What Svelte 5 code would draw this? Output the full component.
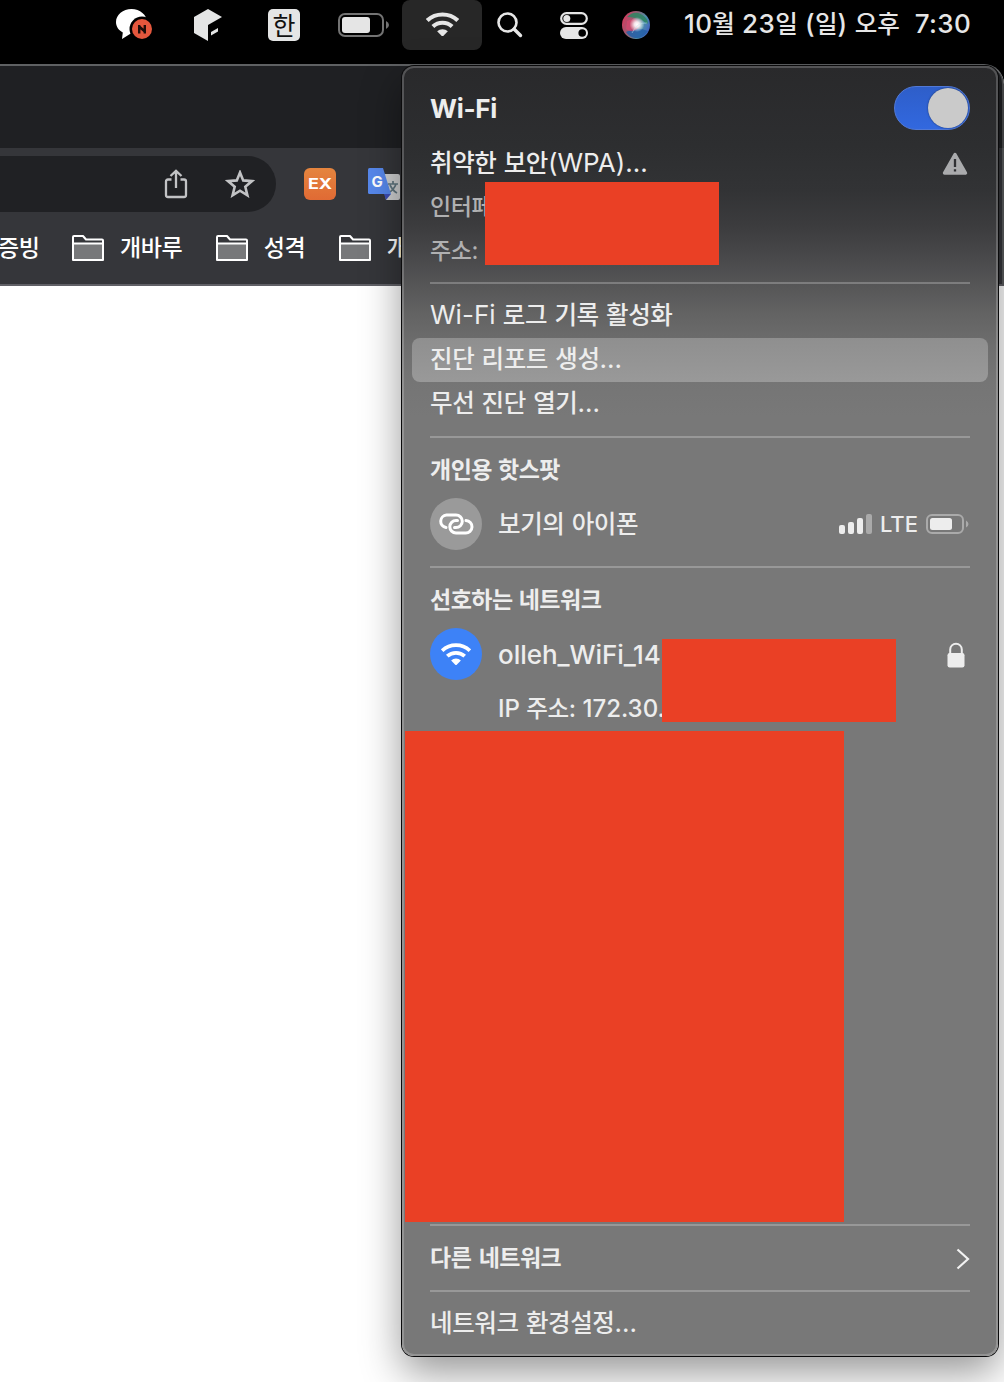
<script>
	const bookmarks = ['개바루', '성격', '개'];

	// hangul runs get their own size and tracking next to the latin text
	function runs(text) {
		return text.split(/([가-힣]+)/).filter(Boolean);
	}

	const isHangul = (text) => /[가-힣]/.test(text);
</script>

{#snippet label(text)}
	<span class="label">{#each runs(text) as run}<span class:ko={isHangul(run)}>{run}</span>{/each}</span>
{/snippet}

{#snippet wifi(size)}
	<svg class="wifi" width={size} height={size * 0.75} viewBox="0 0 32 24" fill="none" aria-hidden="true">
		<path d="M1.2 8.2A21.7 21.7 0 0 1 30.8 8.2" stroke="currentColor" stroke-width="4" />
		<path d="M6.7 14.1A13.6 13.6 0 0 1 25.3 14.1" stroke="currentColor" stroke-width="4" />
		<path d="M16 24L10.8 18.7A7.6 7.6 0 0 1 21.2 18.7Z" fill="currentColor" />
	</svg>
{/snippet}

<div class="screen">
	<header class="menubar">
		<svg class="talk" width="36" height="32" viewBox="0 0 36 32" aria-hidden="true">
			<path d="M15.500 0C7 0 0 5.700 0 13c0 4.600 2.700 8.300 6.800 10.500L6 30l8-5h3c8 0 14-5 14-12S24 0 15.500 0Z" fill="#fff" />
			<circle cx="26" cy="20" r="12.500" fill="#000" />
			<circle cx="26" cy="20" r="10" fill="#e4573d" />
			<path d="M23.200 24.500v-8.500M28.800 24.500v-8.500M23.200 17.500l5.600 5" stroke="#1c0d0a" stroke-width="2.400" />
		</svg>
		<svg class="cube" width="28" height="32" viewBox="0 0 28 32" fill="#e4e5e5" aria-hidden="true">
			<path d="M14 0L28 8L14 16V32L0 24V8Z" />
			<path d="M17 23L24 19V22.500L17 26.500Z" />
		</svg>
		<span class="input-source">한</span>
		<svg class="battery" width="50" height="24" viewBox="0 0 50 24" fill="none" aria-hidden="true">
			<rect x="1" y="1" width="44" height="22" rx="6" stroke="#737373" stroke-width="2" />
			<rect x="4" y="4" width="28" height="16" rx="3" fill="#e5e5e5" />
			<path d="M48 8Q51 9.500 51 12Q51 14.500 48 16Z" fill="#737373" />
		</svg>
		<div class="menubar__active">
			{@render wifi(33)}
		</div>
		<svg class="search" width="26" height="26" viewBox="0 0 26 26" fill="none" stroke="#e6e6e6" aria-hidden="true">
			<circle cx="10.500" cy="10.500" r="9" stroke-width="2.600" />
			<path d="M17 17L23.500 23.500" stroke-width="3.400" stroke-linecap="round" />
		</svg>
		<svg class="controls" width="28" height="28" viewBox="0 0 28 28" fill="none" aria-hidden="true">
			<rect x="1.200" y="2.200" width="25.600" height="10.600" rx="5.300" stroke="#e6e6e6" stroke-width="2.200" />
			<circle cx="6.800" cy="7.500" r="3.500" fill="#e6e6e6" />
			<rect x="0" y="16" width="28" height="12" rx="6" fill="#e6e6e6" />
			<circle cx="22.200" cy="22" r="3.800" fill="#000" />
		</svg>
		<svg class="siri" width="28" height="28" viewBox="0 0 28 28" aria-hidden="true">
			<defs>
				<linearGradient id="orb" x1="0" y1="0.300" x2="1" y2="0.700">
					<stop offset="0" stop-color="#d83a5e" />
					<stop offset="0.400" stop-color="#896477" />
					<stop offset="0.700" stop-color="#4e91aa" />
					<stop offset="1" stop-color="#405dc4" />
				</linearGradient>
				<radialGradient id="glow">
					<stop offset="0" stop-color="#fff" />
					<stop offset="0.350" stop-color="#fff" stop-opacity="0.850" />
					<stop offset="1" stop-color="#fff" stop-opacity="0" />
				</radialGradient>
			</defs>
			<circle cx="14" cy="14" r="14" fill="url(#orb)" />
			<path d="M5 6Q14-3 24 7Q27 11 25 13Q18 6 5 6Z" fill="#2d8562" opacity="0.850" />
			<path d="M4 21Q14 15 26 20Q21 28 13 27Q7 26 4 21Z" fill="#245fa7" opacity="0.850" />
			<path d="M5 10Q14 5 18 14Q12 24 4 18" fill="#df446d" opacity="0.700" />
			<circle cx="15" cy="13.500" r="7.500" fill="url(#glow)" />
			<path d="M10 22Q15 11 25 12" fill="none" stroke="#bfe9f5" stroke-width="0.800" opacity="0.600" />
		</svg>
		<time class="clock">{@render label('10월 23일 (일) 오후')}<span class="clock__time">7:30</span></time>
	</header>

	<main class="browser">
		<div class="browser__tabs"></div>
		<div class="browser__toolbar">
			<div class="omnibox">
				<svg width="24" height="30" viewBox="0 0 24 30" fill="none" stroke="#c2c3c5" stroke-width="2.300" aria-hidden="true">
					<path d="M7.500 10.500H4Q2 10.500 2 12.500V26Q2 28 4 28H20Q22 28 22 26V12.500Q22 10.500 20 10.500H16.500M12 19V2.500M6.500 7L12 1.800L17.500 7" />
				</svg>
				<svg width="30" height="28" viewBox="0 0 30 28" fill="none" stroke="#c2c3c5" stroke-width="2.600" aria-hidden="true">
					<path d="M15 2.500L18.200 10.400L27 11.100L20.300 16.700L22.400 25.300L15 20.700L7.600 25.300L9.700 16.700L3 11.100L11.800 10.400Z" />
				</svg>
			</div>
			<span class="ext"><span class="ext__name">EX</span></span>
			<svg class="translate" width="32" height="32" viewBox="0 0 32 32" aria-hidden="true">
				<path d="M14 6H30Q32 6 32 8V30Q32 32 30 32H18Z" fill="#cfd0d1" />
				<path d="M20 16H30M25 13V16M28 16Q26 22 20 25M22 17Q25 23 29 25" stroke="#60757f" stroke-width="1.700" fill="none" />
				<path d="M16 26H23L18 32Z" fill="#3d4eb5" />
				<path d="M1.500 0H15L23 26H1.500Q0 26 0 24.500V1.500Q0 0 1.500 0Z" fill="#5788ec" />
				<text x="3.500" y="18.500" fill="#fff">G</text>
			</svg>
		</div>
		<nav class="bookmarks">
			<span class="bookmarks__cut">증빙</span>
			{#each bookmarks as name}
				<span class="bookmark">
					<svg width="32" height="26" viewBox="0 0 32 26" aria-hidden="true">
						<path d="M1 25V2Q1 1 2 1H11L14 4.500H30Q31 4.500 31 5.500V25Z" fill="#35363a" />
						<path d="M1 9H31V25H1Z" fill="#77787a" />
						<path d="M1 25V2Q1 1 2 1H11L14 4.500H30Q31 4.500 31 5.500V25ZM1 8.500H31" fill="none" stroke="#fff" stroke-width="2" stroke-linejoin="round" />
					</svg>
					{name}
				</span>
			{/each}
		</nav>
	</main>

	<section class="panel" aria-label="Wi-Fi">
		<div class="panel__head">
			<h1>Wi-Fi</h1>
			<span class="toggle"><span class="toggle__knob"></span></span>
		</div>
		<div class="row">
			{@render label('취약한 보안(WPA)...')}
			<svg class="warning" width="26" height="24" viewBox="0 0 26 24" aria-hidden="true">
				<path d="M13 2.500L23.500 21H2.500Z" fill="#aaabad" stroke="#aaabad" stroke-width="3.400" stroke-linejoin="round" />
				<path d="M13 7V15M13 17.300V19.500" stroke="#303134" stroke-width="2.300" />
			</svg>
		</div>
		<div class="row row--dim">{@render label('인터페')}</div>
		<div class="row row--dim">{@render label('주소:')}</div>
		<hr />
		<div class="row row--first">{@render label('Wi-Fi 로그 기록 활성화')}</div>
		<div class="row row--hover">{@render label('진단 리포트 생성...')}</div>
		<div class="row">{@render label('무선 진단 열기...')}</div>
		<hr class="after-row" />
		<h2>{@render label('개인용 핫스팟')}</h2>
		<div class="network">
			<span class="badge">
				<svg width="36" height="22" viewBox="0 0 36 22" fill="none" stroke="#fff" stroke-width="3" stroke-linecap="round" aria-hidden="true">
					<path d="M8 14.500A6.300 6.300 0 0 1 8.500 2H18A6.300 6.300 0 0 1 18 14.600H16.500" />
					<path d="M28 7.500A6.200 6.200 0 0 1 27.500 20H18A6.200 6.200 0 0 1 18 7.600H19.500" />
				</svg>
			</span>
			{@render label('보기의 아이폰')}
			<span class="cellular">
				<svg width="33" height="20" viewBox="0 0 33 20" fill="#ededed" aria-hidden="true">
					<rect x="0" y="11" width="6" height="9" rx="2" />
					<rect x="9" y="8" width="6" height="12" rx="2" />
					<rect x="18" y="4" width="6" height="16" rx="2" />
					<rect x="27" y="0" width="6" height="20" rx="2" fill="#aaa" />
				</svg>
				<span class="lte">LTE</span>
				<svg width="44" height="20" viewBox="0 0 44 20" fill="none" aria-hidden="true">
					<rect x="1" y="1" width="36" height="18" rx="5" stroke="#aaa" stroke-width="2" />
					<rect x="4" y="4" width="22" height="12" rx="2.500" fill="#ededed" />
					<path d="M40 6.500Q42.500 8 42.500 10Q42.500 12 40 13.500Z" fill="#aaa" />
				</svg>
			</span>
		</div>
		<hr class="after-network" />
		<h2>{@render label('선호하는 네트워크')}</h2>
		<div class="network network--joined">
			<span class="badge badge--on">{@render wifi(30)}</span>
			{@render label('olleh_WiFi_14')}
			<svg class="lock" width="18" height="26" viewBox="0 0 18 26" fill="none" aria-hidden="true">
				<path d="M3.200 12V7.500A5.800 5.800 0 0 1 14.800 7.500V12" stroke="#ededed" stroke-width="2" />
				<rect x="0.500" y="11" width="17" height="14.500" rx="2.200" fill="#ededed" />
			</svg>
		</div>
		<div class="row row--ip">{@render label('IP 주소: 172.30.')}</div>
		<div class="hidden-list"></div>
		<hr class="flush" />
		<div class="row row--more">
			{@render label('다른 네트워크')}
			<svg class="chevron" width="14" height="22" viewBox="0 0 14 22" fill="none" stroke="#f2f2f2" stroke-width="2.200" aria-hidden="true">
				<path d="M1.500 1.500L12 11L1.500 20.500" />
			</svg>
		</div>
		<hr class="flush" />
		<div class="row row--last">{@render label('네트워크 환경설정...')}</div>

		<div class="redaction redaction--address"></div>
		<div class="redaction redaction--ip"></div>
	</section>
</div>

<style>
	:global(body) {
		background: #fff;
	}

	.screen {
		position: relative;
		box-sizing: border-box;
		width: 1004px;
		height: 1382px;
		overflow: hidden;
		background: #000;
		font-family: Inter, 'Noto Sans CJK KR', sans-serif;
		font-size: 26px;
		color: #ededed;
	}

	svg {
		display: block;
		flex: none;
	}

	.label {
		white-space: pre;
	}

	.ko {
		font-family: 'Noto Sans CJK KR', sans-serif;
		font-size: 24.5px;
		font-weight: 500;
		line-height: 0;
		letter-spacing: -0.4px;
	}

	.menubar {
		display: flex;
		align-items: center;
		height: 50px;
		padding-left: 116px;
		color: #e6e6e6;
	}

	.talk {
		margin-bottom: 1px;
	}

	.cube {
		margin-left: 42px;
	}

	.input-source {
		width: 32px;
		height: 32px;
		margin-left: 46px;
		border-radius: 5px;
		background: #e4e5e5;
		color: #111;
		font-family: 'Noto Sans CJK KR', sans-serif;
		font-size: 25px;
		line-height: 30px;
		text-align: center;
	}

	.battery {
		margin-left: 38px;
		overflow: visible;
	}

	.menubar__active {
		display: grid;
		place-items: center;
		width: 80px;
		height: 50px;
		margin-left: 14px;
		border-radius: 8px;
		background: #272727;
	}

	.menubar__active .wifi {
		margin-bottom: 2px;
	}

	.search {
		margin-left: 15px;
	}

	.controls {
		margin-left: 37px;
	}

	.siri {
		margin-left: 34px;
	}

	.clock {
		display: flex;
		gap: 15px;
		margin-left: 34px;
		padding-bottom: 3px;
		line-height: 44px;
		white-space: pre;
		font-weight: 500;
		letter-spacing: 0.35px;
	}

	.clock .ko {
		letter-spacing: 0;
	}

	.browser {
		box-sizing: border-box;
		height: 1318px;
		margin-top: 14px;
		overflow: hidden;
		border-top: 2px solid #5f6163;
		border-radius: 0 20px 0 0;
		background: #fff;
	}

	.browser__tabs {
		height: 82px;
		border-right: 2px solid #4b4c4e;
		border-radius: 0 18px 0 0;
		background: #1f2023;
	}

	.browser__toolbar {
		display: flex;
		align-items: center;
		height: 72px;
		border-right: 2px solid #5a5b5d;
		background: #35363a;
	}

	.omnibox {
		box-sizing: border-box;
		display: flex;
		align-items: center;
		justify-content: flex-end;
		gap: 37px;
		width: 276px;
		height: 56px;
		padding-right: 21px;
		border-radius: 0 28px 28px 0;
		background: #202124;
	}

	.ext {
		width: 32px;
		height: 32px;
		margin-left: 28px;
		border-radius: 6px;
		background: linear-gradient(#e5853e, #e06a34);
		color: #fff;
		font-size: 15px;
		font-weight: 700;
		line-height: 32px;
		text-align: center;
	}

	.ext__name {
		display: block;
		transform: scaleX(1.2);
	}

	.translate {
		margin-left: 32px;
	}

	.translate text {
		font: 700 15px Inter, sans-serif;
	}

	.bookmarks {
		display: flex;
		align-items: center;
		height: 64px;
		border-right: 2px solid #5a5b5d;
		border-bottom: 2px solid #606066;
		background: #35363a;
		color: #fff;
		font-family: 'Noto Sans CJK KR', sans-serif;
		font-size: 23px;
		font-weight: 500;
		letter-spacing: -0.4px;
		line-height: 50px;
	}

	.bookmarks__cut {
		width: 40px;
		margin: 0 34px 13px -2px;
		white-space: nowrap;
	}

	.bookmark {
		display: flex;
		align-items: center;
		gap: 16px;
		margin: 0 33.5px 13px 0;
	}

	.bookmark svg {
		margin-top: 4px;
	}

	.panel {
		position: absolute;
		top: 66px;
		left: 402px;
		box-sizing: border-box;
		width: 596px;
		height: 1290px;
		border: 2px solid rgba(255, 255, 255, 0.2);
		border-radius: 12px;
		background: linear-gradient(#29292b 0, #2d2e30 80px, #323335 125px, #3c3c3e 160px, #48484a 190px, #565657 220px, #636363 248px, #6e6e6e 280px, #757575 315px, #787878 350px);
		background-origin: border-box;
		box-shadow:
			0 0 0 1px #0b0b0c,
			0 16px 40px rgba(0, 0, 0, 0.42);
	}

	.panel__head {
		display: flex;
		align-items: center;
		justify-content: space-between;
		height: 74px;
		padding: 0 26px;
	}

	h1 {
		margin: 8px 0 0;
		font-size: 26px;
		font-weight: 700;
		line-height: 32px;
		letter-spacing: -0.3px;
	}

	.toggle {
		box-sizing: border-box;
		display: flex;
		justify-content: flex-end;
		width: 76px;
		height: 44px;
		margin-top: 6px;
		padding: 1px;
		border: 1px solid #5179d6;
		border-radius: 22px;
		background: linear-gradient(#2e5ec9, #3268df);
	}

	.toggle__knob {
		width: 40px;
		height: 40px;
		border-radius: 50%;
		background: #cacaca;
		box-shadow: 0 0 2px rgba(0, 0, 0, 0.5);
	}

	.row {
		display: flex;
		align-items: center;
		justify-content: space-between;
		height: 41px;
		padding: 0 26px 3px;
		line-height: 41px;
	}

	.warning {
		margin: 3px 2px 0 0;
	}

	.row--dim {
		color: #b0b0b1;
		font-size: 24px;
	}

	.row--dim .label {
		margin-top: -1px;
	}

	.row--dim .ko {
		font-size: 23px;
	}

	.row--first {
		margin-top: 10px;
	}

	.row--hover {
		margin: 0 8px;
		padding: 0 18px 3px;
		border-radius: 8px;
		background: linear-gradient(#8f8f8f, #999);
	}

	hr {
		height: 2px;
		margin: 8px 26px 0;
		border: 0;
		background: rgba(255, 255, 255, 0.24);
	}

	.after-row {
		margin-top: 10px;
	}

	.after-network {
		margin-top: 16px;
	}

	.flush {
		margin-top: 0;
	}

	h2 {
		height: 60px;
		margin: 0;
		padding: 0 26px;
		font-size: 24px;
		font-weight: 600;
		line-height: 64px;
	}

	h2 .ko,
	.row--more .ko {
		font-size: 23px;
		font-weight: 700;
		letter-spacing: -0.5px;
	}

	.network {
		display: flex;
		align-items: center;
		gap: 16px;
		height: 52px;
		padding: 0 26px;
		line-height: 52px;
	}

	.network--joined .label {
		margin-top: 2px;
		font-weight: 500;
		letter-spacing: -0.05px;
	}

	.badge {
		display: grid;
		place-items: center;
		width: 52px;
		height: 52px;
		border-radius: 50%;
		background: #9a9a9a;
		color: #fff;
	}

	.badge--on {
		background: #3d82f7;
	}

	.cellular {
		display: flex;
		align-items: center;
		gap: 8px;
		margin-left: auto;
	}

	.lte {
		font-size: 22px;
		font-weight: 500;
	}

	.lock {
		margin: 2px 5px 0 auto;
	}

	.row--ip {
		margin-top: 8px;
		margin-bottom: -1px;
		padding-left: 94px;
		font-size: 24px;
		font-weight: 500;
	}

	.row--ip .ko {
		font-size: 23.5px;
	}

	.hidden-list {
		width: 439px;
		height: 491px;
		margin: 0 0 2px 1px;
		background: #ea4025;
	}

	.row--more {
		height: 61px;
		line-height: 61px;
	}

	.chevron {
		margin-top: 4px;
	}

	.row--last {
		height: 61px;
		padding-bottom: 0;
		line-height: 61px;
	}

	.redaction {
		position: absolute;
		width: 234px;
		height: 83px;
		background: #ea4025;
	}

	.redaction--address {
		top: 114px;
		left: 81px;
	}

	.redaction--ip {
		top: 571px;
		left: 258px;
	}
</style>
